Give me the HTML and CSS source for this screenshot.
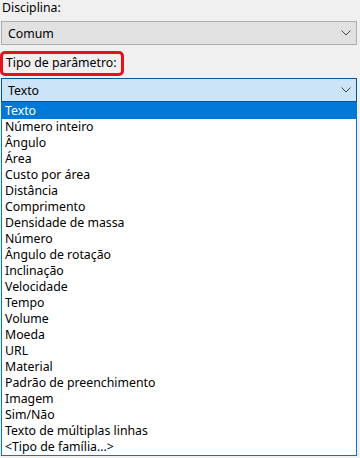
FILE: index.html
```html
<!DOCTYPE html>
<html lang="pt">
<head>
    <meta charset="UTF-8">
    <meta name="viewport" content="width=device-width, initial-scale=1.0">
    <title>Parâmetros</title>
    <link rel="stylesheet" href="styles.css">
</head>
<body>
    <div class="panel">
        <div class="label">Disciplina:</div>
        <div class="combo">
            <span>Comum</span>
            <svg class="chevron" width="10" height="6" viewBox="0 0 10 6"><polyline points="0.5,0.5 5,5 9.5,0.5" fill="none" stroke="#444" stroke-width="1"/></svg>
        </div>

        <div class="label-box">Tipo de parâmetro:</div>
        <div class="combo combo-open">
            <span>Texto</span>
            <svg class="chevron" width="10" height="6" viewBox="0 0 10 6"><polyline points="0.5,0.5 5,5 9.5,0.5" fill="none" stroke="#444" stroke-width="1"/></svg>
        </div>
        <ul class="dropdown">
            <li class="selected">Texto</li>
            <li>Número inteiro</li>
            <li>Ângulo</li>
            <li>Área</li>
            <li>Custo por área</li>
            <li>Distância</li>
            <li>Comprimento</li>
            <li>Densidade de massa</li>
            <li>Número</li>
            <li>Ângulo de rotação</li>
            <li>Inclinação</li>
            <li>Velocidade</li>
            <li>Tempo</li>
            <li>Volume</li>
            <li>Moeda</li>
            <li>URL</li>
            <li>Material</li>
            <li>Padrão de preenchimento</li>
            <li>Imagem</li>
            <li>Sim/Não</li>
            <li>Texto de múltiplas linhas</li>
            <li>&lt;Tipo de família...&gt;</li>
        </ul>
    </div>
</body>
</html>
```

FILE: styles.css
```css
body {
    margin: 0;
    background-color: #f0f0f0;
    font-family: "Noto Sans", "Open Sans", sans-serif;
    font-size: 12.3px;
    color: #000000;
}
.panel {
    padding-left: 1px;
    width: 356px;
}
.label {
    height: 21px;
    line-height: 16px;
    padding-left: 1px;
}
.combo {
    display: flex;
    align-items: center;
    justify-content: space-between;
    height: 22px;
    border: 1px solid #adadad;
    background-color: #e1e1e1;
    padding: 0 5px 0 6px;
}
.label-box {
    display: inline-block;
    margin: 6px 0 2px -1px;
    padding: 1px 4px 2px 3px;
    border: 3px solid #e3131b;
    border-radius: 5px;
    line-height: 16px;
}
.combo-open {
    background-color: #cce4f7;
    border-color: #005499;
}
.dropdown {
    list-style: none;
    margin: 0;
    padding: 0;
    border: 1px solid #0078d7;
    background-color: #ffffff;
}
.dropdown li {
    height: 16px;
    line-height: 16px;
    padding-left: 3px;
}
.dropdown .selected {
    background-color: #0078d7;
    color: #ffffff;
}
```
